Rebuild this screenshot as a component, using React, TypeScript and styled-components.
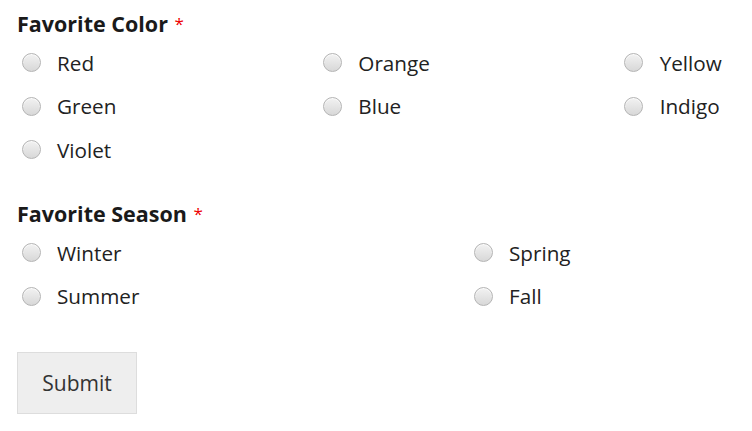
import styled, { createGlobalStyle } from 'styled-components';

const colors = ['Red', 'Orange', 'Yellow', 'Green', 'Blue', 'Indigo', 'Violet'];
const seasons = ['Winter', 'Spring', 'Summer', 'Fall'];

const TRACK_WIDTH = 904;

function App() {
  return (
    <>
      <GlobalStyle />
      <Form onSubmit={e => e.preventDefault()}>
        <Field>
          <Legend>Favorite Color <Required>*</Required></Legend>
          <Options columns={3}>
            {colors.map(c => (
              <Option key={c}>
                <Radio type="radio" name="color" value={c} />
                <span>{c}</span>
              </Option>
            ))}
          </Options>
        </Field>
        <Field>
          <Legend>Favorite Season <Required>*</Required></Legend>
          <Options columns={2}>
            {seasons.map(s => (
              <Option key={s}>
                <Radio type="radio" name="season" value={s} />
                <span>{s}</span>
              </Option>
            ))}
          </Options>
        </Field>
        <SubmitButton type="submit">Submit</SubmitButton>
      </Form>
    </>
  );
}

const GlobalStyle = createGlobalStyle`
  * {
    box-sizing: border-box;
  }

  body {
    margin: 0;
    overflow: hidden;
    background: #fff;
    font-family: "Open Sans", "Liberation Sans", sans-serif;
    color: #222;
  }
`;

const Form = styled.form`
  padding: 10px 17px;
  display: flex;
  flex-direction: column;
  align-items: flex-start;
`;

const Field = styled.fieldset`
  border: none;
  margin: 0 0 28.5px;
  padding: 0;
  width: 100%;
  min-width: 0;
`;

const Legend = styled.div`
  font-size: 21.5px;
  font-weight: 700;
  line-height: 28px;
  color: #1a1a1a;
`;

const Required = styled.span`
  color: #e00;
  font-size: 17px;
  font-weight: 400;
  vertical-align: top;
  margin-left: 1px;
`;

const Options = styled.div<{ columns: number }>`
  display: grid;
  grid-template-columns: repeat(${p => p.columns - 1}, ${p => TRACK_WIDTH / p.columns}px) 1fr;
  margin-top: 3px;
`;

const Option = styled.label`
  display: flex;
  align-items: center;
  height: 43.5px;
  font-size: 20.7px;
  color: #222;
  cursor: pointer;
`;

const Radio = styled.input`
  appearance: none;
  width: 19px;
  height: 19px;
  margin: 0 16.5px 0 4.5px;
  border-radius: 50%;
  border: 1px solid #b4b4b4;
  background: linear-gradient(#f2f2f2, #d8d8d8);
  box-shadow: inset 0 1px 1px rgba(255, 255, 255, 0.8);
  flex-shrink: 0;
`;

const SubmitButton = styled.button`
  margin-top: 5.5px;
  width: 120px;
  height: 62px;
  background: #eee;
  border: 1px solid #ddd;
  font-family: inherit;
  font-size: 21px;
  color: #333;
  cursor: pointer;
`;

export default App;
